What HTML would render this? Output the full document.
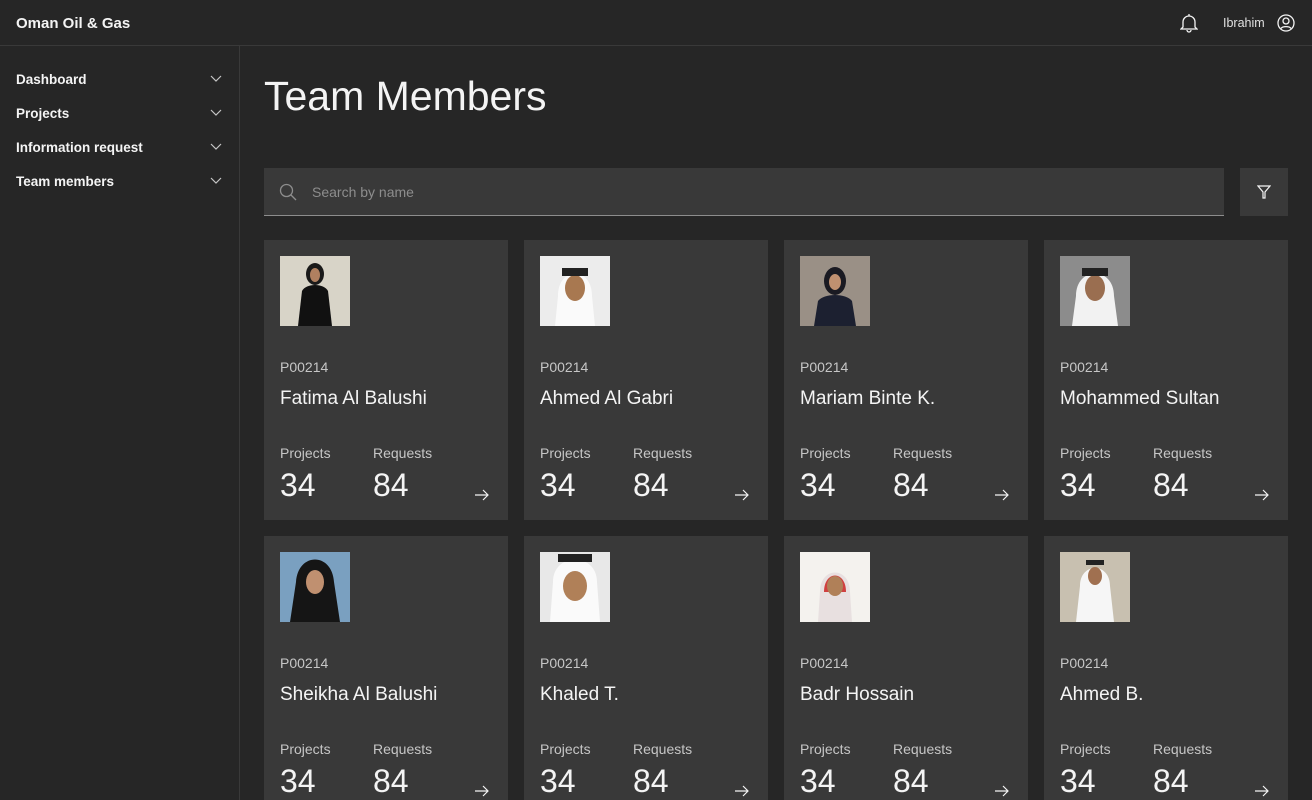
<!DOCTYPE html>
<html style="overflow:hidden;height:800px"><head><meta charset="utf-8"><style>
*{margin:0;padding:0;box-sizing:border-box}
body{width:1312px;height:800px;overflow:hidden;background:#262626;color:#f4f4f4;font-family:"Liberation Sans",sans-serif;position:relative}
.hdr{position:absolute;left:0;top:0;width:1312px;height:46px;border-bottom:1px solid #393939}
.brand{position:absolute;left:16px;top:15px;font-size:15px;font-weight:bold}
.side{position:absolute;left:0;top:46px;width:240px;height:754px;border-right:1px solid #393939}
.nav{position:absolute;left:16px;font-size:13.5px;font-weight:bold}
.chev{position:absolute;left:210px;width:12px;height:8px}
h1{position:absolute;left:264px;top:73px;font-size:41px;font-weight:300;letter-spacing:0}
.search{position:absolute;left:264px;top:168px;width:960px;height:48px;background:#393939;border-bottom:1px solid #8d8d8d}
.search span{position:absolute;left:48px;top:16px;font-size:14px;color:#8d8d8d}
.filter{position:absolute;left:1240px;top:168px;width:48px;height:48px;background:#393939}
.card{position:absolute;width:244px;height:280px;background:#393939;overflow:hidden}
.card svg.p{position:absolute;left:16px;top:16px}
.id{position:absolute;left:16px;top:119px;font-size:14px;color:#c6c6c6}
.nm{position:absolute;left:16px;top:148px;font-size:19px}
.l1,.l2{position:absolute;top:205px;font-size:14px;color:#c6c6c6}
.l1{left:16px}.l2{left:109px}
.n1,.n2{position:absolute;top:227px;font-size:32px;font-weight:300}
.n1{left:16px}.n2{left:109px}
.ar{position:absolute;left:210px;top:249px}
</style></head><body>
<div class="hdr"><div class="brand">Oman Oil &amp; Gas</div>
<svg style="position:absolute;left:1180px;top:13px" width="18" height="20" viewBox="0 0 18 20" fill="none" stroke="#f4f4f4" stroke-width="1.3"><path d="M3 14V9a6 6 0 0 1 12 0v5l2 2H1z"/><path d="M7 17a2 2 0 0 0 4 0"/><path d="M9 1v2"/></svg>
<div style="position:absolute;left:1223px;top:16px;font-size:12.5px;color:#e0e0e0">Ibrahim</div>
<svg style="position:absolute;left:1277px;top:14px" width="18" height="18" viewBox="0 0 18 18" fill="none" stroke="#f4f4f4" stroke-width="1.3"><circle cx="9" cy="9" r="8"/><circle cx="9" cy="7" r="3"/><path d="M4 14.5c1.5-2.5 8.5-2.5 10 0"/></svg>
</div>
<div class="side">
<div class="nav" style="top:26px">Dashboard</div><svg class="chev" style="top:29px" viewBox="0 0 12 8"><path d="M1 1l5 5 5-5" fill="none" stroke="#c6c6c6" stroke-width="1.2"/></svg>
<div class="nav" style="top:60px">Projects</div><svg class="chev" style="top:63px" viewBox="0 0 12 8"><path d="M1 1l5 5 5-5" fill="none" stroke="#c6c6c6" stroke-width="1.2"/></svg>
<div class="nav" style="top:94px">Information request</div><svg class="chev" style="top:97px" viewBox="0 0 12 8"><path d="M1 1l5 5 5-5" fill="none" stroke="#c6c6c6" stroke-width="1.2"/></svg>
<div class="nav" style="top:128px">Team members</div><svg class="chev" style="top:131px" viewBox="0 0 12 8"><path d="M1 1l5 5 5-5" fill="none" stroke="#c6c6c6" stroke-width="1.2"/></svg>
</div>
<h1>Team Members</h1>
<div class="search"><svg style="position:absolute;left:15px;top:15px" width="18" height="18" viewBox="0 0 18 18" fill="none" stroke="#8d8d8d" stroke-width="1.3"><circle cx="7.5" cy="7.5" r="6"/><path d="M12 12l5 5"/></svg><span>Search by name</span></div>
<div class="filter"><svg style="position:absolute;left:17px;top:17px" width="14" height="14" viewBox="0 0 14 14" fill="none" stroke="#f4f4f4" stroke-width="1.2"><path d="M1 1h12L8 7v6H6V7z"/></svg></div>

<div class="card" style="left:264px;top:240px"><svg class="p" width="70" height="70"><rect width="70" height="70" fill="#d8d4c8"/><ellipse cx="35" cy="18" rx="9" ry="11" fill="#1a1a1a"/><ellipse cx="35" cy="19" rx="5" ry="7" fill="#b08060"/><path d="M18 70l4-35c4-8 22-8 26 0l4 35z" fill="#111"/></svg><div class="id">P00214</div><div class="nm">Fatima Al Balushi</div><div class="l1">Projects</div><div class="l2">Requests</div><div class="n1">34</div><div class="n2">84</div><svg class="ar" width="16" height="12" viewBox="0 0 16 12" fill="none" stroke="#f4f4f4" stroke-width="1.2"><path d="M1 6h13M9 1l5 5-5 5"/></svg></div>
<div class="card" style="left:524px;top:240px"><svg class="p" width="70" height="70"><rect width="70" height="70" fill="#ececec"/><path d="M15 70l3-30c0-30 34-30 34 0l3 30z" fill="#fafafa"/><ellipse cx="35" cy="32" rx="10" ry="13" fill="#a87850"/><rect x="22" y="12" width="26" height="8" fill="#222"/></svg><div class="id">P00214</div><div class="nm">Ahmed Al Gabri</div><div class="l1">Projects</div><div class="l2">Requests</div><div class="n1">34</div><div class="n2">84</div><svg class="ar" width="16" height="12" viewBox="0 0 16 12" fill="none" stroke="#f4f4f4" stroke-width="1.2"><path d="M1 6h13M9 1l5 5-5 5"/></svg></div>
<div class="card" style="left:784px;top:240px"><svg class="p" width="70" height="70"><rect width="70" height="70" fill="#9a9086"/><ellipse cx="35" cy="25" rx="11" ry="14" fill="#1a1a22"/><ellipse cx="35" cy="26" rx="6" ry="8" fill="#c09070"/><path d="M14 70l4-25c6-8 28-8 34 0l4 25z" fill="#1c2030"/></svg><div class="id">P00214</div><div class="nm">Mariam Binte K.</div><div class="l1">Projects</div><div class="l2">Requests</div><div class="n1">34</div><div class="n2">84</div><svg class="ar" width="16" height="12" viewBox="0 0 16 12" fill="none" stroke="#f4f4f4" stroke-width="1.2"><path d="M1 6h13M9 1l5 5-5 5"/></svg></div>
<div class="card" style="left:1044px;top:240px"><svg class="p" width="70" height="70"><rect width="70" height="70" fill="#8c8c8c"/><path d="M12 70l4-30c0-30 38-30 38 0l4 30z" fill="#f2f2f2"/><ellipse cx="35" cy="32" rx="10" ry="13" fill="#9a6e50"/><rect x="22" y="12" width="26" height="8" fill="#222"/></svg><div class="id">P00214</div><div class="nm">Mohammed Sultan</div><div class="l1">Projects</div><div class="l2">Requests</div><div class="n1">34</div><div class="n2">84</div><svg class="ar" width="16" height="12" viewBox="0 0 16 12" fill="none" stroke="#f4f4f4" stroke-width="1.2"><path d="M1 6h13M9 1l5 5-5 5"/></svg></div>

<div class="card" style="left:264px;top:536px;height:264px"><svg class="p" width="70" height="70"><rect width="70" height="70" fill="#7aa0c0"/><path d="M10 70l6-40c2-30 36-30 38 0l6 40z" fill="#151515"/><ellipse cx="35" cy="30" rx="9" ry="12" fill="#c09070"/></svg><div class="id">P00214</div><div class="nm">Sheikha Al Balushi</div><div class="l1">Projects</div><div class="l2">Requests</div><div class="n1">34</div><div class="n2">84</div><svg class="ar" width="16" height="12" viewBox="0 0 16 12" fill="none" stroke="#f4f4f4" stroke-width="1.2"><path d="M1 6h13M9 1l5 5-5 5"/></svg></div>
<div class="card" style="left:524px;top:536px;height:264px"><svg class="p" width="70" height="70"><rect width="70" height="70" fill="#e8e8e8"/><path d="M10 70l3-40c0-30 44-30 44 0l3 40z" fill="#fafafa"/><ellipse cx="35" cy="34" rx="12" ry="15" fill="#b08058"/><rect x="18" y="2" width="34" height="8" fill="#222"/></svg><div class="id">P00214</div><div class="nm">Khaled T.</div><div class="l1">Projects</div><div class="l2">Requests</div><div class="n1">34</div><div class="n2">84</div><svg class="ar" width="16" height="12" viewBox="0 0 16 12" fill="none" stroke="#f4f4f4" stroke-width="1.2"><path d="M1 6h13M9 1l5 5-5 5"/></svg></div>
<div class="card" style="left:784px;top:536px;height:264px"><svg class="p" width="70" height="70"><rect width="70" height="70" fill="#f4f2ee"/><path d="M18 70l2-30c0-26 30-26 30 0l2 30z" fill="#e8e0e0"/><path d="M24 40c0-22 22-22 22 0z" fill="#d04040"/><ellipse cx="35" cy="34" rx="8" ry="10" fill="#b08058"/></svg><div class="id">P00214</div><div class="nm">Badr Hossain</div><div class="l1">Projects</div><div class="l2">Requests</div><div class="n1">34</div><div class="n2">84</div><svg class="ar" width="16" height="12" viewBox="0 0 16 12" fill="none" stroke="#f4f4f4" stroke-width="1.2"><path d="M1 6h13M9 1l5 5-5 5"/></svg></div>
<div class="card" style="left:1044px;top:536px;height:264px"><svg class="p" width="70" height="70"><rect width="70" height="70" fill="#c8c0b0"/><path d="M16 70l4-36c0-24 30-24 30 0l4 36z" fill="#f6f6f6"/><ellipse cx="35" cy="24" rx="7" ry="9" fill="#a07050"/><rect x="26" y="8" width="18" height="5" fill="#222"/></svg><div class="id">P00214</div><div class="nm">Ahmed B.</div><div class="l1">Projects</div><div class="l2">Requests</div><div class="n1">34</div><div class="n2">84</div><svg class="ar" width="16" height="12" viewBox="0 0 16 12" fill="none" stroke="#f4f4f4" stroke-width="1.2"><path d="M1 6h13M9 1l5 5-5 5"/></svg></div>
</body></html>
